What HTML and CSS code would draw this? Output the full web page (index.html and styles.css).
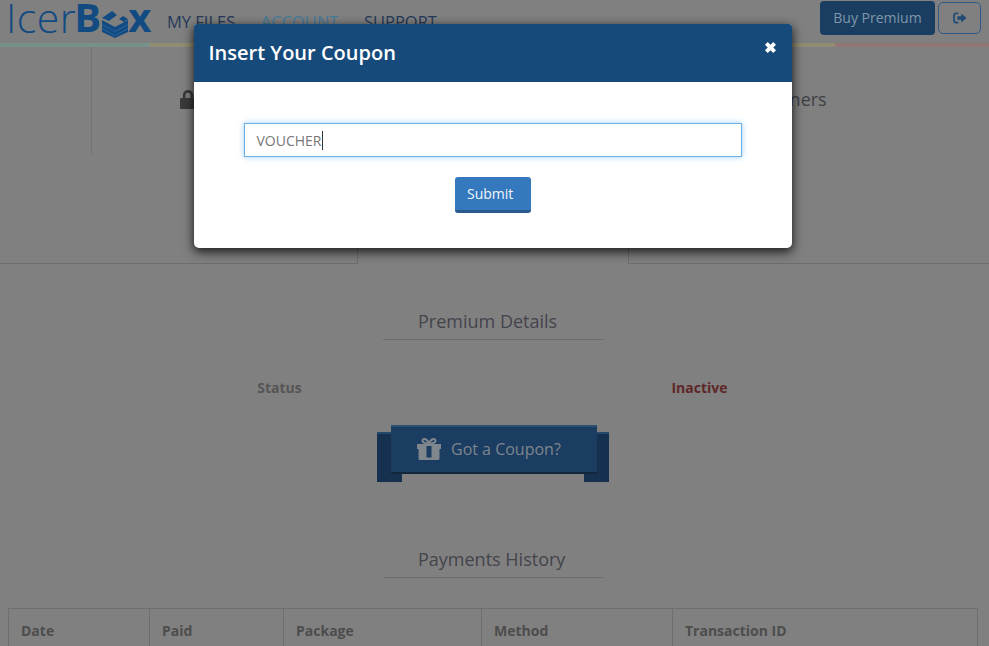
FILE: index.html
```html
<!DOCTYPE html>
<html lang="en">
<head>
<meta charset="utf-8">
<title>IcerBox - Account</title>
<link rel="stylesheet" href="styles.css">
</head>
<body>
<div class="page">
  <header class="topbar">
    <a class="logo"><span class="logo-light">Icer</span><span class="logo-bold">B</span><svg class="logo-box" viewBox="0 0 26 28" aria-hidden="true"><path d="M0 8L10 1l5 4-8 6zM17 9l4-3 5 3-4 3zM0 10l13 7 13-7v12l-13 6-13-6z" fill="#124a82"/><path d="M0 14.500l13 7 13-7M0 18.500l13 7 13-7" fill="none" stroke="#34689a" stroke-width=".8"/></svg><span class="logo-bold">x</span></a>
    <nav class="mainnav">
      <a class="navlink">MY FILES</a>
      <a class="navlink navlink-active">ACCOUNT</a>
      <a class="navlink">SUPPORT</a>
    </nav>
    <div class="actions">
      <a class="btn-premium">Buy Premium</a>
      <a class="btn-logout"><svg viewBox="0 0 16 14" width="14" height="12" aria-hidden="true"><path d="M6 1.500H3.500A2.500 2.500 0 0 0 1 4v6a2.500 2.500 0 0 0 2.500 2.500H6" fill="none" stroke="#1f4a75" stroke-width="2"/><path d="M5 5h4.500V1.800L15.500 7l-6 5.200V9H5z" fill="#1f4a75"/></svg></a>
    </div>
  </header>
  <div class="stripe"><span class="stripe-green"></span><span class="stripe-yellow"></span><span class="stripe-red"></span></div>

  <section class="tabs">
    <div class="tab tab-first">
      <div class="tab-rule"></div>
      <div class="tab-label">
        <svg class="lock" viewBox="0 0 14 18" preserveAspectRatio="none" aria-hidden="true"><path d="M1 8h1.500V5.500a4.500 4.500 0 0 1 9 0V8H13a1 1 0 0 1 1 1v8a1 1 0 0 1-1 1H1a1 1 0 0 1-1-1V9a1 1 0 0 1 1-1zM4.800 8h4.400V5.500a2.200 2.200 0 0 0-4.400 0z" fill="#3a3a3a"/></svg>
        <span>Password</span>
      </div>
    </div>
    <div class="tab tab-active"></div>
    <div class="tab tab-last"><span class="tab-text">Partners</span></div>
  </section>

  <main class="content">
    <h2 class="section-title title-premium">Premium Details</h2>
    <div class="status-row">
      <div class="status-label">Status</div>
      <div class="status-value">Inactive</div>
    </div>
    <div class="ribbon-wrap">
      <a class="ribbon">
        <svg class="gift" viewBox="0 0 24 23" aria-hidden="true"><path fill="#7f868c" d="M0 7h24v5h-1.500v9.500a1.500 1.500 0 0 1-1.500 1.500H3a1.500 1.500 0 0 1-1.500-1.500V12H0zM9.500 9v11.500h5V9z"/><path d="M12 6.500C9 6.500 5.500 6 5.500 3.700 5.500 1.500 9.500 .5 12 6.500c2.500-6 6.500-5 6.500-2.800C18.500 6 15 6.500 12 6.500z" fill="none" stroke="#7f868c" stroke-width="2"/></svg>
        <span>Got a Coupon?</span>
      </a>
    </div>
    <h2 class="section-title title-history">Payments History</h2>
    <table class="history">
      <thead>
        <tr>
          <th class="col-date">Date</th>
          <th class="col-paid">Paid</th>
          <th class="col-package">Package</th>
          <th class="col-method">Method</th>
          <th>Transaction ID</th>
        </tr>
      </thead>
    </table>
  </main>
</div>

<div class="modal" role="dialog">
  <div class="modal-head">
    <h3 class="modal-title">Insert Your Coupon</h3>
    <svg class="modal-close" viewBox="0 0 12 12" aria-label="Close"><path d="M3 0L6 3l3-3 3 3-3 3 3 3-3 3-3-3-3 3-3-3 3-3-3-3z" fill="#fff"/></svg>
  </div>
  <div class="modal-body">
    <div class="coupon-input">VOUCHER<span class="caret"></span></div>
    <a class="btn-submit">Submit</a>
  </div>
</div>
</body>
</html>
```
FILE: styles.css
```css
* { box-sizing: border-box; }
html, body {
  margin: 0;
  height: 646px;
  overflow: hidden;
}
body {
  position: relative;
  background: #808080;
  font-family: "Open Sans", "Liberation Sans", sans-serif;
  font-size: 14px;
  color: #4d4d4d;
}

/* top bar */
.topbar {
  display: flex;
  align-items: flex-start;
  height: 43px;
  padding: 0 8px;
}
.logo {
  display: flex;
  align-items: flex-start;
  width: 146px;
  height: 30px;
  margin: 2px 0 0 -2px;
  color: #124a82;
  font-size: 40px;
  line-height: 30px;
}
.logo-light {
  margin-right: -2px;
  font-size: 41px;
  font-weight: 300;
  letter-spacing: .5px;
}
.logo-bold { font-weight: 700; }
.logo-box { flex: none; width: 26px; height: 28px; margin: 8px 0 0 1px; }
.mainnav {
  display: flex;
  gap: 25.5px;
  margin-left: 15px;
  padding-top: 11px;
}
.navlink {
  font-size: 16.5px;
  line-height: 22px;
  color: #26395a;
}
.navlink-active { color: #467a9a; }
.actions {
  display: flex;
  align-items: flex-start;
  gap: 3px;
  margin-left: auto;
  padding-top: 1px;
}
.btn-premium {
  width: 115px;
  height: 34px;
  background: #1a3e62;
  border-radius: 4px;
  color: #7f97a8;
  font-size: 14px;
  line-height: 34px;
  text-align: center;
}
.btn-logout {
  display: flex;
  align-items: center;
  justify-content: center;
  width: 43px;
  height: 32px;
  margin-top: 1px;
  border: 1px solid #2f5a85;
  border-radius: 5px;
}
.stripe {
  display: flex;
  height: 4px;
}
.stripe-green { width: 150px; background: #76908a; }
.stripe-yellow { width: 685px; background: #918d70; }
.stripe-red { flex: 1; background: #927676; }

/* tabs */
.tabs {
  display: grid;
  grid-template-columns: 357px 272px 1fr;
  height: 217px;
}
.tab {
  position: relative;
  border-bottom: 1px solid #6e6e6e;
}
.tab-rule {
  width: 92px;
  height: 108px;
  border-right: 1px solid #737373;
}
.tab-label {
  display: flex;
  gap: 8px;
  margin: -66px 0 0 180px;
  font-size: 18px;
  color: #3a3a42;
}
.lock { width: 16px; height: 20px; }
.tab-active {
  border-bottom: 0;
  border-left: 1px solid #6e6e6e;
  border-right: 1px solid #6e6e6e;
}
.tab-last {
  padding: 39px 0 0 126px;
  font-size: 18px;
  line-height: 26px;
  color: #3f3f47;
}

/* content */
.content {
  padding: 0 11px 0 8px;
}
.section-title {
  width: 220px;
  height: 31px;
  margin: 0 auto;
  padding-left: 35px;
  border-bottom: 1px solid #6e6e6e;
  font-size: 18px;
  font-weight: 400;
  line-height: 24px;
  color: #44444c;
}
.title-premium { margin-top: 45px; }
.title-history { margin-top: 73px; }
.status-row {
  display: grid;
  grid-template-columns: 1fr 1fr;
  margin-top: 38px;
  padding: 0 68.5px 0 61.5px;
  font-size: 14px;
  font-weight: 700;
  line-height: 20px;
  text-align: center;
}
.status-label { color: #555; }
.status-value { color: #5e2727; }

/* ribbon */
.ribbon-wrap {
  display: flex;
  justify-content: center;
  margin-top: 27px;
  padding-left: 2px;
}
.ribbon {
  position: relative;
  display: flex;
  align-items: center;
  gap: 10px;
  width: 206px;
  height: 49px;
  padding: 0 0 2px 26px;
  background: #1a3d61;
  border-top: 2px solid #2c4f72;
  border-bottom: 2px solid #12263c;
  font-size: 16px;
  color: #7f868c;
}
.ribbon::before,
.ribbon::after {
  content: "";
  position: absolute;
  top: 5px;
  width: 25px;
  height: 48px;
  background: #16314f;
  border-top: 2px solid #264a6c;
  z-index: -1;
}
.ribbon::before { left: -14px; }
.ribbon::after { right: -12px; }
.gift { width: 24px; height: 23px; }

/* table */
.history {
  width: 970px;
  margin-top: 30px;
  border-collapse: collapse;
  table-layout: fixed;
}
.history th {
  height: 46px;
  padding: 0 12px 2px;
  border: 1px solid #6e6e6e;
  font-size: 14px;
  font-weight: 700;
  text-align: left;
  color: #4d4d4d;
}
.col-date { width: 141px; }
.col-paid { width: 134px; }
.col-package { width: 198px; }
.col-method { width: 191px; }

/* modal */
.modal {
  position: absolute;
  top: 24px;
  left: 194px;
  width: 598px;
  height: 224px;
  background: #fff;
  border-radius: 3px 3px 5px 5px;
  box-shadow: 0 3px 9px rgba(0, 0, 0, .6), 0 4px 14px rgba(0, 0, 0, .4);
}
.modal-head {
  display: flex;
  align-items: center;
  justify-content: space-between;
  height: 58px;
  padding: 0 16px 2px 14.5px;
  background: #164a7b;
  border-radius: 3px 3px 0 0;
}
.modal-title {
  margin: 0;
  font-size: 20px;
  font-weight: 600;
  color: #fff;
}
.modal-close {
  width: 11px;
  height: 11px;
  margin-bottom: 10px;
}
.modal-body {
  display: flex;
  flex-direction: column;
  align-items: center;
  padding-top: 41px;
}
.coupon-input {
  display: flex;
  align-items: center;
  width: 498px;
  height: 34px;
  padding: 0 11.500px;
  border: 1px solid #66afe9;
  box-shadow: 0 0 6px rgba(102, 175, 233, .6);
  font-size: 14px;
  color: #777;
}
.caret {
  width: 1px;
  height: 19px;
  background: #333;
}
.btn-submit {
  width: 76px;
  height: 36px;
  margin-top: 20px;
  padding-left: 12px;
  background: #3478bd;
  border-bottom: 3px solid #285a8e;
  border-radius: 3px;
  color: #f2f6fa;
  font-size: 14px;
  font-weight: 500;
  line-height: 33px;
}
```
